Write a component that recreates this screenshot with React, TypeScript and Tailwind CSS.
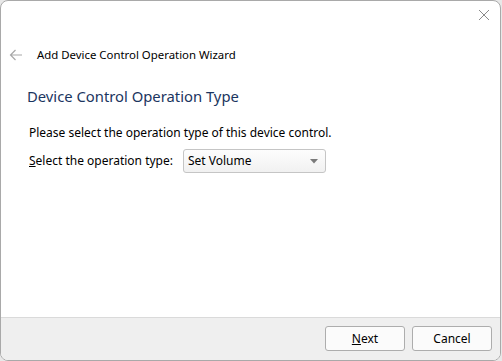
const font = { fontFamily: '"Segoe UI", "Noto Sans", "Open Sans", sans-serif' }

const App = () => {
    return (
        <div className="w-[502px] h-[361px] bg-[#e8e8e8] relative overflow-hidden" style={font}>
            <div className="w-[501px] h-[361px] bg-white border border-[#a9a9a9] rounded-lg flex flex-col overflow-hidden">
                {/* title bar */}
                <div className="h-[30px] flex justify-end items-start pr-[10px] pt-[8px]">
                    <svg width="12" height="12" viewBox="0 0 12 12" className="text-[#8a8a8a]">
                        <path d="M1 1 L11 11 M11 1 L1 11" stroke="currentColor" strokeWidth="1" fill="none" />
                    </svg>
                </div>
                {/* header */}
                <div className="flex items-center h-[46px] pl-[8px] pt-[2px]">
                    <svg width="14" height="12" viewBox="0 0 14 12" className="text-[#a8a8a8]">
                        <path d="M13 6 H1.5 M6.5 1 L1.5 6 L6.5 11" stroke="currentColor" strokeWidth="1.2" fill="none" />
                    </svg>
                    <span className="ml-[14px] text-[11.4px] text-black">Add Device Control Operation Wizard</span>
                </div>
                {/* body */}
                <div className="flex-1 pl-[26px] pr-4">
                    <div className="text-[14.8px] text-[#1b3560] leading-5 mt-[9px]">Device Control Operation Type</div>
                    <div className="text-[12px] text-black mt-[18px] ml-[2px]">Please select the operation type of this device control.</div>
                    <div className="flex items-center mt-[7px] ml-[2px] text-[12px] text-black">
                        <span><span className="underline">S</span>elect the operation type:</span>
                        <div className="ml-[10px] w-[143px] h-[24px] border border-[#c5c5c5] rounded-[3px] bg-gradient-to-b from-[#fdfdfd] to-[#f1f1f1] flex items-center justify-between pl-[4px] pr-[7px]">
                            <span>Set Volume</span>
                            <svg width="8" height="5" viewBox="0 0 8 5">
                                <path d="M0 0 H8 L4 4.5 Z" fill="#7a7a7a" />
                            </svg>
                        </div>
                    </div>
                </div>
                {/* footer */}
                <div className="h-[43px] bg-[#efefef] border-t border-[#dadada] flex justify-end items-start pt-[8px] pr-[8px] gap-[7px]">
                    <button className="w-[80px] h-[25px] border border-[#adadad] rounded-[3px] bg-[#fbfbfb] text-[12px] text-black">
                        <span className="underline">N</span>ext
                    </button>
                    <button className="w-[80px] h-[25px] border border-[#adadad] rounded-[3px] bg-[#fbfbfb] text-[12px] text-black">
                        Cancel
                    </button>
                </div>
            </div>
        </div>
    )
}

export default App
